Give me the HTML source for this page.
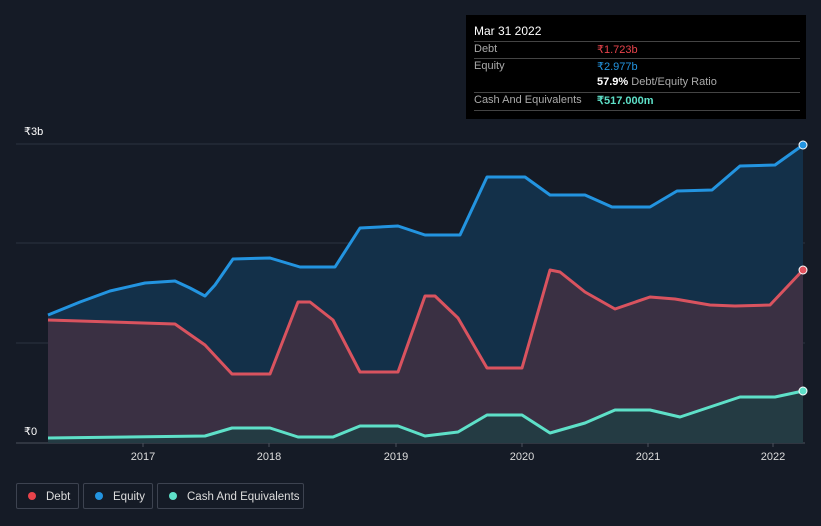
<!DOCTYPE html>
<html><head><meta charset="utf-8"><style>
body{margin:0;background:#151b26;width:821px;height:526px;overflow:hidden;font-family:"Liberation Sans",sans-serif}
svg{position:absolute;left:0;top:0}
.tt{position:absolute;left:466px;top:15px;width:340px;height:104px;background:#000;color:#fff;font-size:11px}
.row{position:absolute;left:8px;width:326px;border-bottom:1px solid #444}
.lab{position:absolute;left:0;color:#aaa}
.val{position:absolute;left:123px}
.leg{position:absolute;top:483px;height:26px;border:1px solid #3d4350;border-radius:2px;color:#ddd;font-size:11.5px;line-height:26px;box-sizing:border-box}
.dot{display:inline-block;width:8px;height:8px;border-radius:50%;margin:0 10px 0 11px;vertical-align:-0px}
</style></head><body>
<svg width="821" height="526">
<g stroke="#2c3340" stroke-width="1">
<line x1="16" y1="144" x2="805" y2="144"/>
<line x1="16" y1="243" x2="805" y2="243"/>
<line x1="16" y1="343" x2="805" y2="343"/>
<line x1="16" y1="443" x2="805" y2="443" stroke="#4a505c"/>
</g>
<path d="M48,315 L80,302 L110,291 L145,283 L175,281 L190,288 L205,296 L215,285 L233,259 L270,258 L300,267 L335,267 L360,228 L398,226 L425,235 L460,235 L487,177 L525,177 L550,195 L585,195 L612,207 L650,207 L677,191 L712,190 L740,166 L775,165 L803,145 L803,443 L48,443Z" fill="#133049"/>
<path d="M48,320 L175,324 L205,345 L232,374 L270,374 L298,302 L310,302 L333,320 L360,372 L398,372 L425,296 L435,296 L458,318 L487,368 L522,368 L550,270 L560,272 L585,292 L615,309 L650,297 L675,299 L710,305 L735,306 L770,305 L803,270 L803,443 L48,443Z" fill="#3a3043"/>
<path d="M48,438 L205,436 L232,428 L270,428 L298,437 L333,437 L360,426 L398,426 L425,436 L458,432 L487,415 L522,415 L550,433 L585,423 L615,410 L650,410 L680,417 L710,407 L740,397 L775,397 L803,391 L803,443 L48,443Z" fill="#243b43"/>
<g fill="none" stroke-width="3" stroke-linejoin="round">
<path d="M48,315 L80,302 L110,291 L145,283 L175,281 L190,288 L205,296 L215,285 L233,259 L270,258 L300,267 L335,267 L360,228 L398,226 L425,235 L460,235 L487,177 L525,177 L550,195 L585,195 L612,207 L650,207 L677,191 L712,190 L740,166 L775,165 L803,145" stroke="#2394e0"/>
<path d="M48,320 L175,324 L205,345 L232,374 L270,374 L298,302 L310,302 L333,320 L360,372 L398,372 L425,296 L435,296 L458,318 L487,368 L522,368 L550,270 L560,272 L585,292 L615,309 L650,297 L675,299 L710,305 L735,306 L770,305 L803,270" stroke="#d9535f"/>
<path d="M48,438 L205,436 L232,428 L270,428 L298,437 L333,437 L360,426 L398,426 L425,436 L458,432 L487,415 L522,415 L550,433 L585,423 L615,410 L650,410 L680,417 L710,407 L740,397 L775,397 L803,391" stroke="#5ee0c8"/>
</g>
<circle cx="803" cy="145" r="4" fill="#2394e0" stroke="#fff" stroke-width="1"/>
<circle cx="803" cy="270" r="4" fill="#e0525e" stroke="#fff" stroke-width="1"/>
<circle cx="803" cy="391" r="4" fill="#5ee0c8" stroke="#fff" stroke-width="1"/>
<rect x="16" y="424" width="32" height="18" fill="#151b26"/>
<g fill="#fff" font-size="11">
<text x="24" y="135">₹3b</text>
<text x="24" y="435">₹0</text>
</g>
<g fill="#ddd" font-size="11" text-anchor="middle">
<text x="143" y="460">2017</text><text x="269" y="460">2018</text><text x="396" y="460">2019</text>
<text x="522" y="460">2020</text><text x="648" y="460">2021</text><text x="773" y="460">2022</text>
</g>
<g stroke="#4a505c"><line x1="143" y1="443" x2="143" y2="447"/><line x1="269" y1="443" x2="269" y2="447"/><line x1="396" y1="443" x2="396" y2="447"/><line x1="522" y1="443" x2="522" y2="447"/><line x1="648" y1="443" x2="648" y2="447"/><line x1="773" y1="443" x2="773" y2="447"/></g>
</svg>
<div class="tt">
<div style="position:absolute;left:8px;top:9px;font-size:12px">Mar 31 2022</div>
<div class="row" style="top:12px;height:14px"></div>
<div class="row" style="top:26px;height:17px"><span class="lab" style="top:2px">Debt</span><span class="val" style="top:2px;color:#e8434b">₹1.723b</span></div>
<div class="row" style="top:44px;height:17px;border:0"><span class="lab" style="top:1px">Equity</span><span class="val" style="top:1px;color:#2394e0">₹2.977b</span></div>
<div class="row" style="top:61px;height:16px"><span class="val" style="top:0;color:#aaa"><b style="color:#fff">57.9%</b> Debt/Equity Ratio</span></div>
<div class="row" style="top:78px;height:17px"><span class="lab" style="top:1px">Cash And Equivalents</span><span class="val" style="top:1px;color:#5ee0c8;font-weight:bold">₹517.000m</span></div>
</div>
<div class="leg" style="left:16px;width:63px"><span class="dot" style="background:#e8434b"></span>Debt</div>
<div class="leg" style="left:83px;width:70px"><span class="dot" style="background:#2394e0"></span>Equity</div>
<div class="leg" style="left:157px;width:147px"><span class="dot" style="background:#5ee0c8"></span>Cash And Equivalents</div>
</body></html>
